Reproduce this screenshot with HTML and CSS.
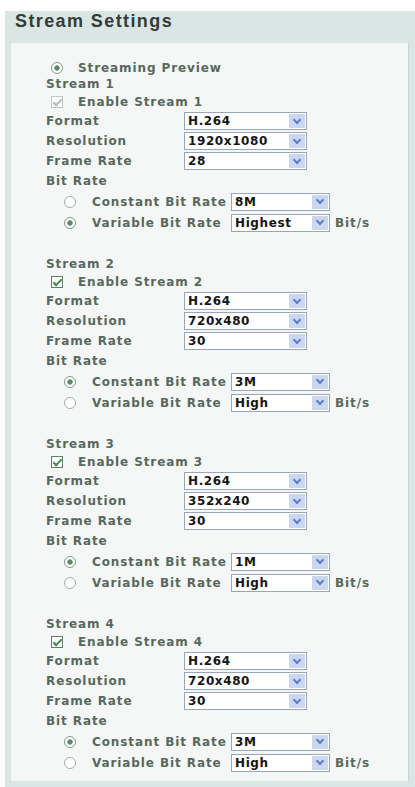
FILE: index.html
```html
<!DOCTYPE html>
<html lang="en">
<head>
<meta charset="utf-8">
<title>Stream Settings</title>
<link rel="stylesheet" href="styles.css">
</head>
<body>
<div class="panel">
  <h1 class="title">Stream Settings</h1>
  <div class="inner">
    <div class="opt preview"><span class="radio on"></span><span>Streaming Preview</span></div>

    <section class="stream">
      <div class="head">Stream 1</div>
      <div class="opt"><span class="check on dim"></span><span>Enable Stream 1</span></div>
      <div class="field"><span class="lbl">Format</span><span class="select"><span class="val">H.264</span><span class="btn"></span></span></div>
      <div class="field"><span class="lbl">Resolution</span><span class="select"><span class="val">1920x1080</span><span class="btn"></span></span></div>
      <div class="field"><span class="lbl">Frame Rate</span><span class="select"><span class="val">28</span><span class="btn"></span></span></div>
      <div class="head sub">Bit Rate</div>
      <div class="rate"><span class="radio"></span><span class="rlbl">Constant Bit Rate</span><span class="select small"><span class="val">8M</span><span class="btn"></span></span></div>
      <div class="rate"><span class="radio on"></span><span class="rlbl">Variable Bit Rate</span><span class="select small"><span class="val">Highest</span><span class="btn"></span></span><span class="unit">Bit/s</span></div>
    </section>

    <section class="stream">
      <div class="head">Stream 2</div>
      <div class="opt"><span class="check on"></span><span>Enable Stream 2</span></div>
      <div class="field"><span class="lbl">Format</span><span class="select"><span class="val">H.264</span><span class="btn"></span></span></div>
      <div class="field"><span class="lbl">Resolution</span><span class="select"><span class="val">720x480</span><span class="btn"></span></span></div>
      <div class="field"><span class="lbl">Frame Rate</span><span class="select"><span class="val">30</span><span class="btn"></span></span></div>
      <div class="head sub">Bit Rate</div>
      <div class="rate"><span class="radio on"></span><span class="rlbl">Constant Bit Rate</span><span class="select small"><span class="val">3M</span><span class="btn"></span></span></div>
      <div class="rate"><span class="radio"></span><span class="rlbl">Variable Bit Rate</span><span class="select small"><span class="val">High</span><span class="btn"></span></span><span class="unit">Bit/s</span></div>
    </section>

    <section class="stream">
      <div class="head">Stream 3</div>
      <div class="opt"><span class="check on"></span><span>Enable Stream 3</span></div>
      <div class="field"><span class="lbl">Format</span><span class="select"><span class="val">H.264</span><span class="btn"></span></span></div>
      <div class="field"><span class="lbl">Resolution</span><span class="select"><span class="val">352x240</span><span class="btn"></span></span></div>
      <div class="field"><span class="lbl">Frame Rate</span><span class="select"><span class="val">30</span><span class="btn"></span></span></div>
      <div class="head sub">Bit Rate</div>
      <div class="rate"><span class="radio on"></span><span class="rlbl">Constant Bit Rate</span><span class="select small"><span class="val">1M</span><span class="btn"></span></span></div>
      <div class="rate"><span class="radio"></span><span class="rlbl">Variable Bit Rate</span><span class="select small"><span class="val">High</span><span class="btn"></span></span><span class="unit">Bit/s</span></div>
    </section>

    <section class="stream">
      <div class="head">Stream 4</div>
      <div class="opt"><span class="check on"></span><span>Enable Stream 4</span></div>
      <div class="field"><span class="lbl">Format</span><span class="select"><span class="val">H.264</span><span class="btn"></span></span></div>
      <div class="field"><span class="lbl">Resolution</span><span class="select"><span class="val">720x480</span><span class="btn"></span></span></div>
      <div class="field"><span class="lbl">Frame Rate</span><span class="select"><span class="val">30</span><span class="btn"></span></span></div>
      <div class="head sub">Bit Rate</div>
      <div class="rate"><span class="radio on"></span><span class="rlbl">Constant Bit Rate</span><span class="select small"><span class="val">3M</span><span class="btn"></span></span></div>
      <div class="rate"><span class="radio"></span><span class="rlbl">Variable Bit Rate</span><span class="select small"><span class="val">High</span><span class="btn"></span></span><span class="unit">Bit/s</span></div>
    </section>
  </div>
</div>
</body>
</html>
```

FILE: styles.css
```css
* {
  box-sizing: border-box;
}

html,
body {
  margin: 0;
  background: #ffffff;
  overflow: hidden;
}

body {
  font-family: "DejaVu Sans", Verdana, sans-serif;
  font-size: 12px;
  font-weight: bold;
  letter-spacing: 0.9px;
  color: #58685d;
}

/* outer settings panel with its title band */
.panel {
  margin: 11px 0 0 5px;
  height: 776px;
  background: #dae6e4;
}

.title {
  margin: 0;
  height: 31px;
  padding-left: 10px;
  font-family: "Liberation Sans", Arial, sans-serif;
  font-size: 18px;
  line-height: 20px;
  font-weight: bold;
  letter-spacing: 1.4px;
  color: #343c38;
}

.inner {
  margin: 0 6px 0 5px;
  height: 740px;
  padding: 17px 0 0 35px;
  background: #f4f7f6;
  border: 1px solid #dde5e2;
  border-right-color: #c9d3d0;
}

/* one block per stream */
.stream {
  margin-bottom: 22px;
}

.head {
  height: 18px;
  display: flex;
  align-items: center;
}

.head.sub {
  height: 20px;
}

.opt {
  height: 18px;
  display: flex;
  align-items: center;
  padding-left: 5px;
  gap: 15px;
}

.opt.preview {
  height: 15px;
}

.field {
  height: 20px;
  display: flex;
  align-items: center;
}

.lbl {
  width: 138px;
  flex: none;
}

.rate {
  height: 21px;
  display: flex;
  align-items: center;
  padding-left: 18px;
}

.rlbl {
  width: 155px;
  flex: none;
  padding-left: 16px;
}

/* dropdown look-alike */
.select {
  display: flex;
  align-items: stretch;
  width: 123px;
  height: 18px;
  border: 1px solid #98a6b8;
  background: #ffffff;
  padding: 1px;
}

.select.small {
  width: 99px;
}

.val {
  flex: 1;
  padding-left: 2px;
  line-height: 14px;
  color: #151515;
  letter-spacing: 0.6px;
}

.btn {
  width: 16px;
  flex: none;
  background: #cbd7ef;
  display: flex;
  align-items: center;
  justify-content: center;
}

.btn::after {
  content: "";
  width: 4px;
  height: 4px;
  margin-top: -3px;
  border-right: 2px solid #5e7fc6;
  border-bottom: 2px solid #5e7fc6;
  transform: rotate(45deg);
}

.unit {
  margin-left: 5px;
}

/* radio buttons */
.radio {
  width: 12px;
  height: 12px;
  flex: none;
  border-radius: 50%;
  border: 1px solid #a3aca7;
  background: #ffffff;
}

.radio.on {
  border-color: #7e9c88;
  background: radial-gradient(circle, #5e8a6a 0 2.4px, #ffffff 3px);
}

/* check boxes */
.check {
  position: relative;
  width: 12px;
  height: 12px;
  flex: none;
  border: 1px solid #64806c;
  background: #ffffff;
}

.check.on::after {
  content: "";
  position: absolute;
  left: 3px;
  top: 0px;
  width: 3px;
  height: 7px;
  border-right: 2px solid #3f8a4d;
  border-bottom: 2px solid #3f8a4d;
  transform: rotate(45deg);
}

.check.dim {
  border-color: #bcc8c1;
}

.check.dim::after {
  border-color: #a9c1b0;
}
```
